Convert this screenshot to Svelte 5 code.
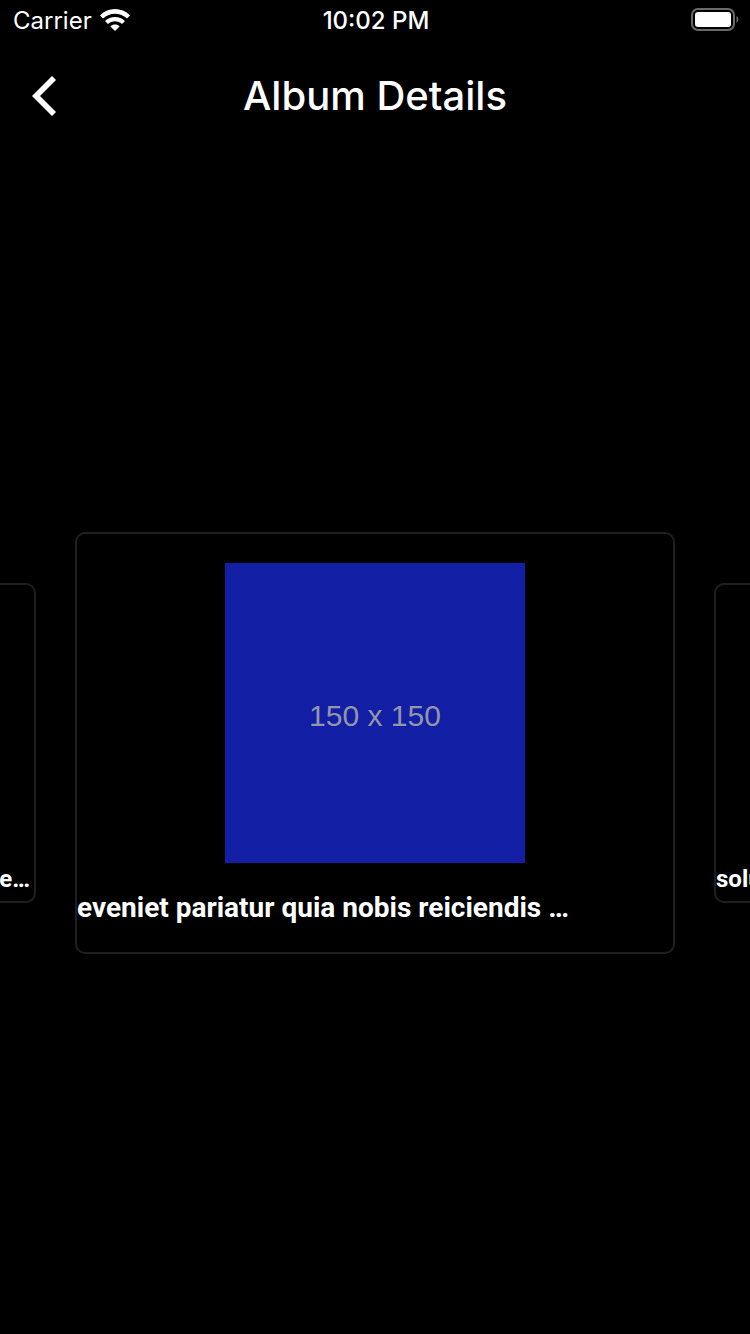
<script>
  const title = 'Album Details';
  const photo = { size: '150 x 150', caption: 'eveniet pariatur quia nobis reiciendis …' };
</script>

<div class="screen">
  <div class="status">
    <div class="carrier">
      <span>Carrier</span>
      <svg width="30" height="22" viewBox="0 0 30 22" aria-hidden="true">
        <path d="M0 6.4C8.2-2 21.8-2 30 6.4L27 9.5C20.4 3.1 9.6 3.1 3 9.5Z" />
        <path d="M5 12C10.5 6.6 19.5 6.6 25 12L22 15C18 11.2 12 11.2 8 15Z" />
        <path d="M10.4 17.4C13 15 17 15 19.6 17.4L15 22Z" />
      </svg>
    </div>
    <time>10:02 PM</time>
    <svg class="battery" width="48" height="24" viewBox="0 0 48 24" aria-hidden="true">
      <rect x="1" y="1" width="42" height="21" rx="6" fill="none" stroke="#6a6a6a" stroke-width="2" />
      <rect x="4" y="4" width="36" height="15" rx="3" />
      <path d="M45.5 8C48 9.5 48 13.5 45.5 15Z" fill="#6a6a6a" />
    </svg>
  </div>

  <header>
    <button type="button" aria-label="Back">
      <svg width="24" height="40" viewBox="0 0 24 40" aria-hidden="true">
        <path d="M20 0L24 4L8 20L24 36L20 40L0 20Z" />
      </svg>
    </button>
    <h1>{title}</h1>
  </header>

  <main>
    <article class="card side previous"><p>e…</p></article>
    <article class="card current">
      <div class="photo">{photo.size}</div>
      <p>{photo.caption}</p>
    </article>
    <article class="card side"><p>solu</p></article>
  </main>
</div>

<style>
  :global(body) {
    margin: 0;
    background: #000;
  }
  .screen {
    display: flex;
    flex-direction: column;
    min-height: 100vh;
    overflow: hidden;
    background: #000;
    color: #fff;
    font-family: Inter, sans-serif;
  }
  svg {
    display: block;
    fill: #fff;
  }
  .status {
    display: grid;
    grid-template-columns: 1fr auto 1fr;
    align-items: center;
    height: 40px;
    padding: 0 11px 0 13px;
    font-size: 24px;
    line-height: 42px;
  }
  .carrier {
    display: flex;
    align-items: center;
    gap: 8px;
  }
  .carrier span,
  time {
    padding-top: 2px;
    line-height: 38px;
  }
  time {
    font-weight: 500;
  }
  .battery {
    justify-self: end;
  }
  header {
    display: grid;
    grid-template-columns: 1fr auto 1fr;
    align-items: center;
    height: 112px;
    padding: 0 32px;
  }
  button {
    justify-self: start;
    padding: 0;
    border: 0;
    background: none;
    cursor: pointer;
  }
  h1 {
    margin: 0;
    font-size: 40px;
    line-height: 48px;
    font-weight: 500;
  }
  main {
    flex: 1;
    display: flex;
    align-items: center;
    justify-content: center;
    gap: 39px;
    overflow: hidden;
  }
  .card {
    box-sizing: border-box;
    display: flex;
    flex-direction: column;
    flex: 0 0 80%;
    border: 2px solid #1f1f1f;
    border-radius: 10px;
    font-family: Roboto, sans-serif;
    font-weight: 700;
  }
  .current {
    padding: 29px 0 28px;
    gap: 29px;
    font-size: 28px;
    line-height: 32px;
  }
  .side {
    justify-content: flex-end;
    height: 320px;
    padding-bottom: 8px;
    font-size: 24px;
    line-height: 28px;
  }
  .previous {
    padding-right: 4px;
    text-align: right;
  }
  .photo {
    box-sizing: border-box;
    display: flex;
    align-items: center;
    justify-content: center;
    align-self: center;
    width: 300px;
    height: 300px;
    padding-top: 6px;
    background: #121ea3;
    color: #9295ab;
    font: 400 30px/36px "Liberation Sans", sans-serif;
  }
  p {
    margin: 0;
    overflow: hidden;
    white-space: nowrap;
  }
</style>
